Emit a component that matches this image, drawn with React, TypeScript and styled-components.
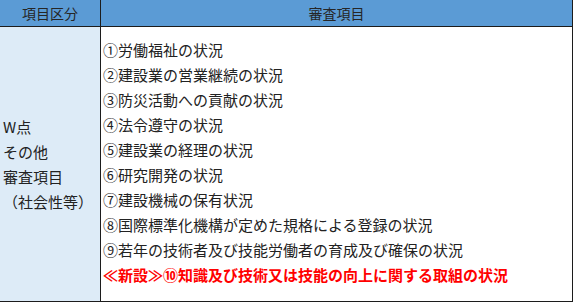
import React from "react";
import styled, { createGlobalStyle } from "styled-components";

const Global = createGlobalStyle`
  html, body {
    margin: 0;
    padding: 0;
    background: #ffffff;
  }
  body {
    font-family: "Noto Sans CJK JP", "Noto Sans", sans-serif;
    color: #222222;
  }
`;

const items = [
  "①労働福祉の状況",
  "②建設業の営業継続の状況",
  "③防災活動への貢献の状況",
  "④法令遵守の状況",
  "⑤建設業の経理の状況",
  "⑥研究開発の状況",
  "⑦建設機械の保有状況",
  "⑧国際標準化機構が定めた規格による登録の状況",
  "⑨若年の技術者及び技能労働者の育成及び確保の状況",
];

const categoryLines = ["W点", "その他", "審査項目", "（社会性等）"];

export default function App() {
  return (
    <>
      <Global />
      <Table>
        <HeadCell>項目区分</HeadCell>
        <HeadCell>審査項目</HeadCell>
        <CategoryCell>
          {categoryLines.map((line) => (
            <Line key={line}>{line}</Line>
          ))}
        </CategoryCell>
        <ItemsCell>
          {items.map((item) => (
            <Line key={item}>{item}</Line>
          ))}
          <Line $highlight>≪新設≫⑩知識及び技術又は技能の向上に関する取組の状況</Line>
        </ItemsCell>
      </Table>
    </>
  );
}

const Table = styled.div`
  display: grid;
  grid-template-columns: 100px 471px;
  grid-template-rows: 26px 274px;
  gap: 1px;
  width: 572px;
  background: #1c1c1c;
  border-right: 1px solid #1c1c1c;
  border-bottom: 1px solid #1c1c1c;
`;

const HeadCell = styled.div`
  background: #5b9bd5;
  display: flex;
  align-items: center;
  justify-content: center;
  font-size: 14px;
  color: #262626;
`;

const CategoryCell = styled.div`
  background: #ddebf7;
  display: flex;
  flex-direction: column;
  justify-content: center;
  padding-left: 3px;
`;

const ItemsCell = styled.div`
  background: #ffffff;
  display: flex;
  flex-direction: column;
  padding: 10px 0 0 2px;
`;

const Line = styled.div<{ $highlight?: boolean }>`
  font-size: 15px;
  line-height: 25px;
  height: 25px;
  white-space: nowrap;
  color: ${(p) => (p.$highlight ? "#ff0000" : "#222222")};
  font-weight: ${(p) => (p.$highlight ? 700 : 400)};
`;
